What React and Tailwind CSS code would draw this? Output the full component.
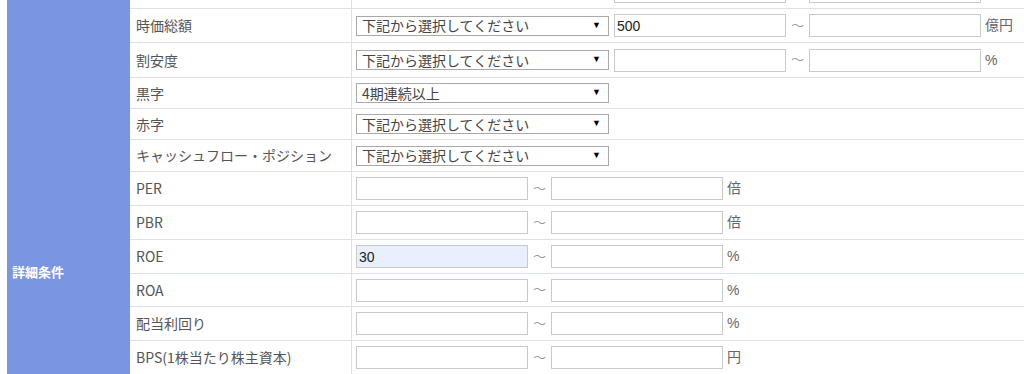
import React from 'react';

const rows = [
  { label: '時価総額', h: 'h-[34px]', select: '下記から選択してください', range: ['500', ''], unit: '億円' },
  { label: '割安度', h: 'h-[35px]', select: '下記から選択してください', range: ['', ''], unit: '%' },
  { label: '黒字', h: 'h-[31px]', select: '4期連続以上' },
  { label: '赤字', h: 'h-[31px]', select: '下記から選択してください' },
  { label: 'キャッシュフロー・ポジション', h: 'h-[32px]', select: '下記から選択してください' },
  { label: 'PER', h: 'h-[34px]', range: ['', ''], unit: '倍' },
  { label: 'PBR', h: 'h-[34px]', range: ['', ''], unit: '倍' },
  { label: 'ROE', h: 'h-[34px]', range: ['30', ''], unit: '%', filled: true },
  { label: 'ROA', h: 'h-[33px]', range: ['', ''], unit: '%' },
  { label: '配当利回り', h: 'h-[34px]', range: ['', ''], unit: '%' },
  { label: 'BPS(1株当たり株主資本)', h: 'h-[34px]', range: ['', ''], unit: '円' },
];

const Select = ({ value }) => (
  <div
    className="w-[253px] h-[20px] border border-[#a9a9a9] bg-white flex items-center justify-between pl-[5px] pr-[7px] text-[14px] text-[#444] shrink-0"
    style={{ fontFamily: '"Noto Sans CJK JP", sans-serif' }}
  >
    <span>{value}</span>
    <span className="text-[9px] text-black" style={{ fontFamily: '"Liberation Sans", sans-serif' }}>▼</span>
  </div>
);

const Field = ({ value, filled }) => (
  <input
    readOnly
    value={value}
    className={`w-[172px] h-[23px] border border-[#c9c9c9] px-[2px] text-[14px] text-[#222] outline-none shrink-0 ${filled ? 'bg-[#e8f0fe]' : 'bg-white'}`}
    style={{ fontFamily: 'Arial, "Liberation Sans", sans-serif' }}
  />
);

const Range = ({ values, unit, filled, tilde = true }) => (
  <div className="flex items-center">
    <Field value={values[0]} filled={filled} />
    <span className="w-[23px] text-center text-[13px] text-[#999]">{tilde ? '～' : ''}</span>
    <Field value={values[1]} />
    <span className="ml-[4px] text-[14px] text-[#666]">{unit}</span>
  </div>
);

export default function App() {
  return (
    <div
      className="w-[1024px] h-[374px] overflow-hidden bg-white flex"
      style={{ fontFamily: '"Liberation Sans", "Noto Sans CJK JP", sans-serif' }}
    >
      <div className="w-[7px] shrink-0" />
      {/* section header */}
      <div className="w-[123px] shrink-0 bg-[#7a96e2] pl-[5px] pt-[260px]">
        <span className="text-[13px] font-bold text-white" style={{ fontFamily: '"Noto Sans CJK JP", sans-serif' }}>
          詳細条件
        </span>
      </div>

      <div className="flex-1 flex flex-col">
        {/* previous row, cut off at top */}
        <div className="flex h-[9px] shrink-0 border-b border-[#dbe1e9] overflow-hidden">
          <div className="w-[222px] border-r border-[#dbe1e9] shrink-0" />
          <div className="flex items-center h-[23px] mt-[-20px] pl-[4px]">
            <div className="w-[253px] shrink-0" />
            <div className="ml-[5px]">
              <Range values={['', '']} unit="" tilde={false} />
            </div>
          </div>
        </div>

        {rows.map((r) => (
          <div key={r.label} className={`flex shrink-0 border-b border-[#dbe1e9] ${r.h}`}>
            <div
              className="w-[222px] shrink-0 border-r border-[#dbe1e9] pl-[6px] flex items-center text-[14px] text-[#555]"
              style={{ fontFamily: '"Noto Sans CJK JP", sans-serif' }}
            >
              {r.label}
            </div>
            <div className="flex items-center pl-[4px]">
              {r.select && <Select value={r.select} />}
              {r.range && (
                <div className={r.select ? 'ml-[5px]' : ''}>
                  <Range values={r.range} unit={r.unit} filled={r.filled} />
                </div>
              )}
            </div>
          </div>
        ))}
      </div>
    </div>
  );
}
